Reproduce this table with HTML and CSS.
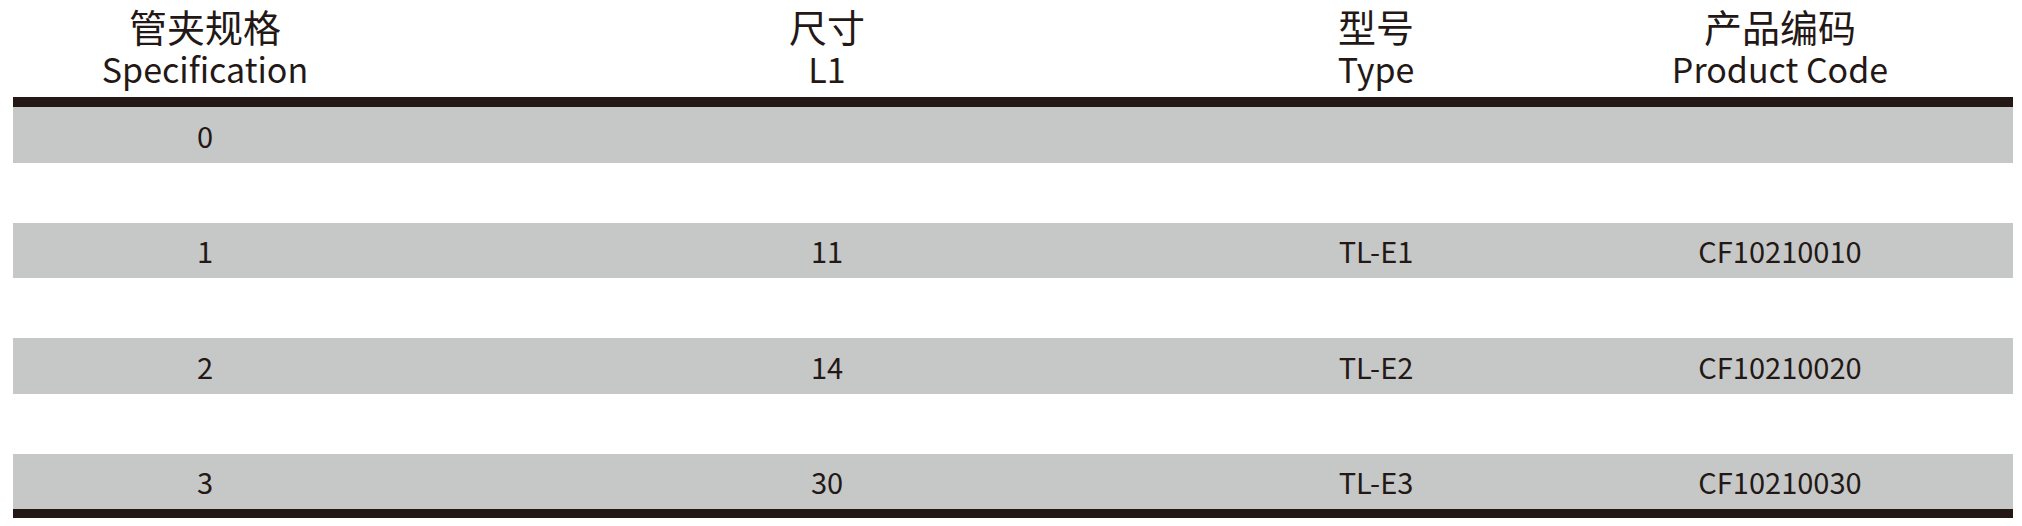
FILE: index.html
```html
<!DOCTYPE html>
<html lang="zh-CN">
<head>
<meta charset="utf-8">
<title>管夹规格</title>
<link rel="stylesheet" href="styles.css">
</head>
<body>
<div class="spec-table">
  <div class="head">
    <div class="th c1"><span class="zh">管夹规格</span><span class="en">Specification</span></div>
    <div class="th c2"><span class="zh">尺寸</span><span class="en">L1</span></div>
    <div class="th c3"><span class="zh">型号</span><span class="en">Type</span></div>
    <div class="th c4"><span class="zh">产品编码</span><span class="en">Product Code</span></div>
  </div>
  <div class="body">
    <div class="row">
      <div class="td c1">0</div>
      <div class="td c2"></div>
      <div class="td c3"></div>
      <div class="td c4"></div>
    </div>
    <div class="row">
      <div class="td c1">1</div>
      <div class="td c2">11</div>
      <div class="td c3">TL-E1</div>
      <div class="td c4">CF10210010</div>
    </div>
    <div class="row">
      <div class="td c1">2</div>
      <div class="td c2">14</div>
      <div class="td c3">TL-E2</div>
      <div class="td c4">CF10210020</div>
    </div>
    <div class="row">
      <div class="td c1">3</div>
      <div class="td c2">30</div>
      <div class="td c3">TL-E3</div>
      <div class="td c4">CF10210030</div>
    </div>
  </div>
</div>
</body>
</html>
```

FILE: styles.css
```css
html, body {
  margin: 0;
  padding: 0;
  background: #ffffff;
}

body {
  font-family: "Noto Sans CJK SC", "Noto Sans", sans-serif;
  color: #231815;
}

.spec-table {
  width: 2000px;
  margin-left: 13px;
}

.head,
.row {
  display: grid;
  grid-template-columns: 384px 860px 238px 518px;
}

.head {
  padding-top: 7px;
  padding-bottom: 11px;
  border-bottom: 10px solid #231815;
}

.th {
  display: flex;
  flex-direction: column;
  align-items: center;
}

.zh {
  font-size: 38px;
  line-height: 38px;
}

.en {
  margin-top: 7px;
  font-size: 34px;
  line-height: 34px;
}

.body {
  display: flex;
  flex-direction: column;
  gap: 60px;
  border-bottom: 9px solid #231815;
}

.row {
  height: 55.5px;
  background: #c6c8c7;
  align-items: center;
}

.td {
  text-align: center;
  font-size: 29px;
  line-height: 32px;
}

.c4 {
  padding-left: 52px;
}
```
